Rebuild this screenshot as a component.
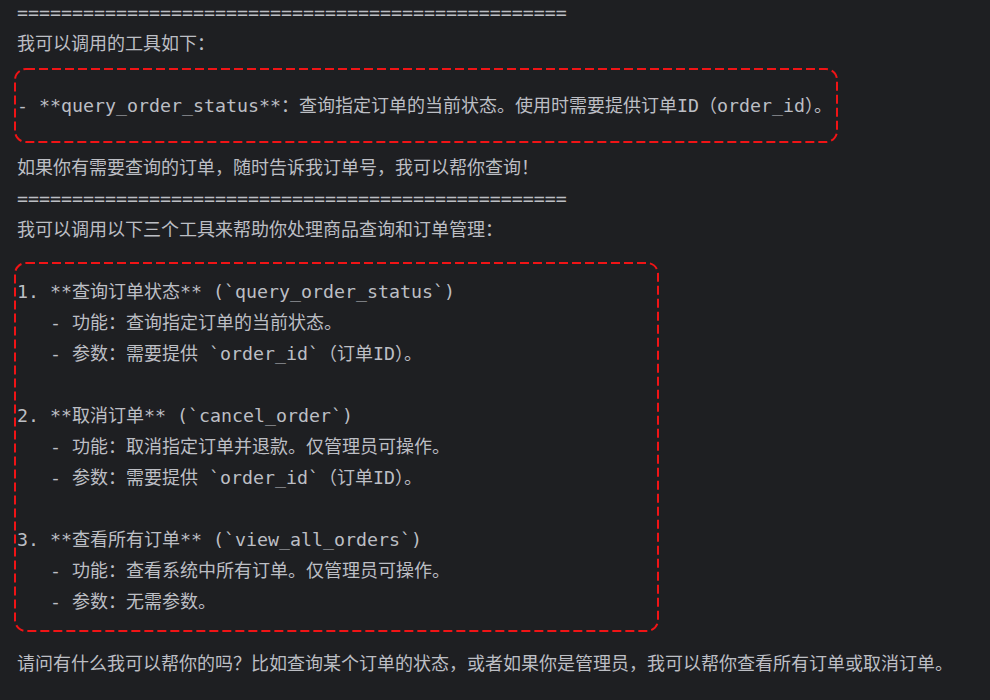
import React from "react";

function Txt({ s }: { s: string }) {
  const parts = s.split(/([\x20-\x7e]+)/).filter((p) => p.length > 0);
  return (
    <>
      {parts.map((p, i) =>
        /^[\x20-\x7e]+$/.test(p) ? (
          <span key={i} className="font-['DejaVu_Sans_Mono',monospace] text-[18.27px]">
            {p}
          </span>
        ) : (
          <span key={i}>{p}</span>
        )
      )}
    </>
  );
}

function Line({ s }: { s: string }) {
  return (
    <div className="h-[31px] leading-[31px] whitespace-pre">
      {s ? <Txt s={s} /> : "\u00a0"}
    </div>
  );
}

function DashBox({ w, h }: { w: number; h: number }) {
  return (
    <svg width={w} height={h} className="block" fill="none">
      <rect
        x={1}
        y={1}
        width={w - 2}
        height={h - 2}
        rx={11}
        ry={11}
        stroke="#f01416"
        strokeWidth={2}
        strokeDasharray="9 4"
      />
    </svg>
  );
}

const eq = "==================================================";

export default function App() {
  return (
    <div className="w-[990px] h-[700px] overflow-hidden bg-[#1e1f22] text-[#bcbec4] font-['DejaVu_Sans_Mono','Noto_Sans_CJK_SC',monospace] text-[18px]">
      <div className="mt-[-3px] pl-[17px]">
        <Line s={eq} />
        <Line s="我可以调用的工具如下：" />
        <div className="relative">
          <Line s="" />
          <Line s="- **query_order_status**：查询指定订单的当前状态。使用时需要提供订单ID（order_id）。" />
          <Line s="" />
          <div className="absolute left-[-3px] top-[9px] pointer-events-none">
            <DashBox w={824} h={75} />
          </div>
        </div>
        <Line s="如果你有需要查询的订单，随时告诉我订单号，我可以帮你查询！" />
        <Line s={eq} />
        <Line s="我可以调用以下三个工具来帮助你处理商品查询和订单管理：" />
        <div className="relative">
          <Line s="" />
          <Line s="1. **查询订单状态** (`query_order_status`)" />
          <Line s="   - 功能：查询指定订单的当前状态。" />
          <Line s="   - 参数：需要提供 `order_id`（订单ID）。" />
          <Line s="" />
          <Line s="2. **取消订单** (`cancel_order`)" />
          <Line s="   - 功能：取消指定订单并退款。仅管理员可操作。" />
          <Line s="   - 参数：需要提供 `order_id`（订单ID）。" />
          <Line s="" />
          <Line s="3. **查看所有订单** (`view_all_orders`)" />
          <Line s="   - 功能：查看系统中所有订单。仅管理员可操作。" />
          <Line s="   - 参数：无需参数。" />
          <Line s="" />
          <div className="absolute left-[-3px] top-[17px] pointer-events-none">
            <DashBox w={645} h={370} />
          </div>
        </div>
        <Line s="请问有什么我可以帮你的吗？比如查询某个订单的状态，或者如果你是管理员，我可以帮你查看所有订单或取消订单。" />
      </div>
    </div>
  );
}
